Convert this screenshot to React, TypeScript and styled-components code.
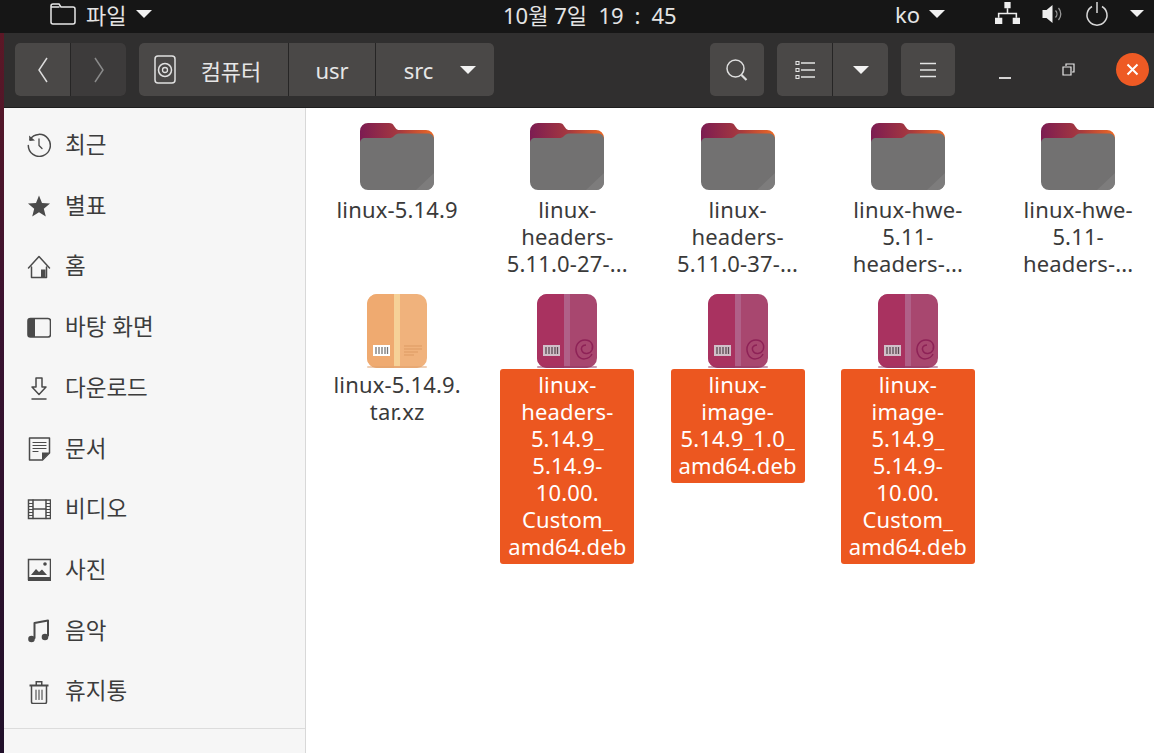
import React from "react"
import styled, { createGlobalStyle } from "styled-components"

const Global = createGlobalStyle`
  html, body { margin: 0; padding: 0; height: 100%; overflow: hidden; background: #f6f6f6; }
  body { font-family: "Noto Sans", "Noto Sans CJK KR", sans-serif; }
`

const Screen = styled.div`
  width: 1154px;
  height: 753px;
  display: flex;
  flex-direction: column;
  overflow: hidden;
`

const TopBar = styled.div`
  height: 33px;
  flex: none;
  box-sizing: border-box;
  padding-bottom: 6px;
  display: flex;
  align-items: center;
  background: #161616;
  color: #e4e4e4;
  font-size: 22px;
`

const AppMenu = styled.div`
  flex: 0 0 503px;
  display: flex;
  align-items: center;
  padding-left: 50px;
  box-sizing: border-box;
  gap: 10px;
`

const Clock = styled.div`
  font-size: 22px;
  white-space: pre;
`

const Tray = styled.div`
  margin-left: auto;
  display: flex;
  align-items: center;
  padding-right: 10px;
`

const Lang = styled.div`
  display: flex;
  align-items: center;
  gap: 9px;
  margin-right: 50px;
`

const TrayIcons = styled.div`
  display: flex;
  align-items: center;
  gap: 21px;
`

const Caret = styled.span<{ $size?: number }>`
  display: inline-block;
  width: 0;
  height: 0;
  border-left: ${(p) => p.$size ?? 7}px solid transparent;
  border-right: ${(p) => p.$size ?? 7}px solid transparent;
  border-top: ${(p) => p.$size ?? 7}px solid #f2f2f2;
`

const Body = styled.div`
  flex: 1;
  min-height: 0;
  display: flex;
  border-left: 4px solid #4a1630;
  border-image: linear-gradient(#5c1826, #3a1230 40%, #20102a) 1;
  background: #f6f6f6;
`

const Window = styled.div`
  flex: 1;
  min-width: 0;
  display: flex;
  flex-direction: column;
`

const Header = styled.div`
  height: 75px;
  flex: none;
  box-sizing: border-box;
  display: flex;
  align-items: center;
  padding: 0 0 1px 11px;
  background: #302f2f;
  border-bottom: 1px solid #1e1e1e;
  color: #e6e6e6;
`

const Group = styled.div<{ $gapLeft?: number }>`
  display: flex;
  height: 53px;
  margin-left: ${(p) => p.$gapLeft ?? 0}px;
  border-radius: 5px;
  overflow: hidden;
  gap: 1px;
  background: #262525;
`

const Tool = styled.div<{ $width: number; $dim?: boolean; $gap?: number; $pad?: string }>`
  width: ${(p) => p.$width}px;
  box-sizing: border-box;
  padding: ${(p) => p.$pad ?? "0"};
  display: flex;
  align-items: center;
  justify-content: center;
  background: ${(p) => (p.$dim ? "#3d3b3b" : "#4a4847")};
  font-size: 22px;
  gap: ${(p) => p.$gap ?? 14}px;
`

const Spacer = styled.div`
  flex: 1;
`

const WindowButtons = styled.div`
  display: flex;
  align-items: center;
  margin-left: 43px;
  margin-right: 5px;
`

const MinimizeGlyph = styled.svg`
  margin-top: 16px;
  margin-right: 50px;
`

const RestoreGlyph = styled.svg`
  margin-right: 41px;
`

const CloseCircle = styled.div`
  width: 33px;
  height: 33px;
  border-radius: 50%;
  background: #ee5a24;
  display: flex;
  align-items: center;
  justify-content: center;
`

const Content = styled.div`
  flex: 1;
  min-height: 0;
  display: flex;
`

const Sidebar = styled.nav`
  width: 302px;
  flex: none;
  box-sizing: border-box;
  background: #f6f6f6;
  border-right: 1px solid #d8d8d8;
  padding-top: 7px;
  display: flex;
  flex-direction: column;
`

const Place = styled.div`
  height: 60.7px;
  flex: none;
  display: flex;
  align-items: center;
  padding-left: 23px;
  gap: 14px;
  color: #3c3c3c;
  font-size: 22.5px;
  line-height: 1;
`

const PlaceIcon = styled.span`
  width: 24px;
  height: 24px;
  flex: none;
  display: block;
  color: #4a4a4a;
`

const Divider = styled.div`
  height: 1px;
  background: #dcdcdc;
  margin-top: 6px;
`

const Files = styled.main`
  flex: 1;
  min-width: 0;
  background: #fff;
  overflow: hidden;
  box-sizing: border-box;
  padding: 12px 0 0 6px;
  display: grid;
  grid-template-columns: repeat(5, 170.25px);
  grid-auto-rows: 161px;
  row-gap: 14px;
`

const FileCell = styled.div`
  display: flex;
  flex-direction: column;
  align-items: center;
`

const IconBox = styled.div<{ $lift: number }>`
  height: 74px;
  box-sizing: border-box;
  padding-bottom: ${(p) => p.$lift}px;
  display: flex;
  align-items: flex-end;
  justify-content: center;
`

const FileLabel = styled.div<{ $selected?: boolean }>`
  width: 134px;
  box-sizing: border-box;
  padding: 2px 0 4px;
  text-align: center;
  font-size: 22px;
  letter-spacing: 0.15px;
  line-height: 27px;
  white-space: pre;
  border-radius: 3px;
  color: ${(p) => (p.$selected ? "#fff" : "#3a3a3a")};
  background: ${(p) => (p.$selected ? "#ec5720" : "transparent")};
`

const FolderIcon = ({ id }: { id: string }) => (
  <svg width="74" height="70" viewBox="0 0 74 70">
    <defs>
      <linearGradient id={id} x1="0" x2="1" y1="0" y2="0">
        <stop offset="0" stopColor="#7c1c52" />
        <stop offset="0.55" stopColor="#a83a3e" />
        <stop offset="1" stopColor="#ee6a24" />
      </linearGradient>
    </defs>
    <path d="M0 10a8 8 0 0 1 8-8h21c3 0 4 1 5 3l1.500 2c1 1.500 2 2 4 2H66a8 8 0 0 1 8 8v20H0z" fill={`url(#${id})`} />
    <path d="M0 22c0-3 2-5 5-5h24c2.500 0 3.500-.5 5-2s3-2.500 5-2.500h29c3.500 0 6 2.500 6 6V61a8 8 0 0 1-8 8H8a8 8 0 0 1-8-8z" fill="#727171" />
    <path d="M74 52v9a8 8 0 0 1-8 8H56z" fill="#7d7c7c" />
  </svg>
)

const PackageIcon = ({ deb }: { deb?: boolean }) => (
  <svg width="60" height="74" viewBox="0 0 60 74">
    <rect width="60" height="74" rx="10" fill={deb ? "#a8476f" : "#f0b27c"} />
    <path d="M10 0h17v74H10a10 10 0 0 1-10-10V10A10 10 0 0 1 10 0z" fill={deb ? "#a93260" : "#efaa70"} />
    <rect x="27" width="6" height="72" fill={deb ? "#b06088" : "#f6d197"} />
    <rect x="6" y="51" width="17" height="11" fill={deb ? "#d0bfc8" : "#fff"} />
    <path d="M9 53v7M12 53v7M15 53v7M18 53v7M20.500 53v7" stroke={deb ? "#5b4a52" : "#777"} strokeWidth="1.300" />
    {deb ? (
      <path d="M55 60c-3 6-12 7-15 0-3-7 1-14 8-14 6 0 9 5 7 10-2 4-8 5-10 1-1.500-3 0-6 4-6" fill="none" stroke="#8e2257" strokeWidth="1.500" />
    ) : (
      <path d="M37 52h18M37 55h18M37 58h14M37 61h10" stroke="#dd9a62" strokeWidth="1" />
    )}
    <rect y="72" width="60" height="2" rx="1" fill={deb ? "#8f3a63" : "#dfa06c"} opacity="0.5" />
  </svg>
)

const Line = ({ d, w = 1.5 }: { d: string; w?: number }) => (
  <path d={d} fill="none" stroke="currentColor" strokeWidth={w} strokeLinecap="round" strokeLinejoin="round" />
)

const icons: Record<string, React.ReactNode> = {
  recent: (
    <>
      <Line d="M3 6.500A11 11 0 1 1 1.300 12.500" />
      <path d="M2 2.500l.5 5.500 5.500-.5z" fill="currentColor" />
      <Line d="M12 6v6.500l3 3" w={1.300} />
    </>
  ),
  star: <path d="M12 1.500l3 7.500 8 .6-6.200 5.100 2 7.800L12 18.200 5.200 22.500l2-7.800L1 9.600l8-.6z" fill="currentColor" />,
  home: (
    <>
      <Line d="M1.500 13L12 1.500 22.500 13" />
      <Line d="M4.500 12v10.500h15V12" />
      <path d="M14 14.500h4.500v8H14z" fill="currentColor" />
    </>
  ),
  desktop: (
    <>
      <rect x="1" y="3.500" width="22.500" height="18.500" rx="2.500" fill="none" stroke="currentColor" strokeWidth="1.600" />
      <path d="M3 3.500h5v18.500H3a2 2 0 0 1-2-2V5.500a2 2 0 0 1 2-2z" fill="currentColor" />
    </>
  ),
  download: (
    <>
      <Line d="M9 2h6v9h4l-7 7.500L5 11h4z" />
      <Line d="M5 23h14" />
    </>
  ),
  docs: (
    <>
      <Line d="M15.500 23H2.500V1h20v15z" />
      <path d="M15 23v-7.500h7.500z" fill="currentColor" />
      <Line d="M6 5.500h13M6 8.500h13M6 11.500h13M6 14.500h5" w={1.200} />
    </>
  ),
  video: (
    <>
      <rect x="1.500" y="3" width="22" height="18.500" fill="none" stroke="currentColor" strokeWidth="1.500" />
      <Line d="M6 3v18.500M19 3v18.500M6 12h13" />
      <path d="M1.500 6.500h4.500M1.500 9.500h4.500M1.500 12.500h4.500M1.500 15.500h4.500M1.500 18.500h4.500M19 6.500h4.500M19 9.500h4.500M19 12.500h4.500M19 15.500h4.500M19 18.500h4.500" stroke="currentColor" strokeWidth="1" />
    </>
  ),
  photo: (
    <>
      <rect x="1.500" y="1.500" width="22" height="20" fill="none" stroke="currentColor" strokeWidth="1.500" />
      <path d="M1 19h23v4H1zM4 17l5-6 3 3 3-2.500 5 5.500z" fill="currentColor" />
      <circle cx="18" cy="6" r="1.800" fill="currentColor" />
    </>
  ),
  music: (
    <>
      <Line d="M7.500 19V4L21 1.500v15" w={2} />
      <circle cx="4.500" cy="20" r="3.300" fill="currentColor" />
      <circle cx="18" cy="18" r="3.300" fill="currentColor" />
    </>
  ),
  trash: (
    <>
      <Line d="M4.500 6.500V22a1.500 1.500 0 0 0 1.500 1.500h12a1.500 1.500 0 0 0 1.500-1.500V6.500" />
      <path d="M2.500 4.500h19v2h-19zM8.500 1h7v3.500H14V2.500h-4v2H8.500z" fill="currentColor" />
      <Line d="M9 10v9.500M12 10v9.500M15 10v9.500" w={1.100} />
    </>
  ),
}

const places = [
  { label: "최근", icon: "recent" },
  { label: "별표", icon: "star" },
  { label: "홈", icon: "home" },
  { label: "바탕 화면", icon: "desktop" },
  { label: "다운로드", icon: "download" },
  { label: "문서", icon: "docs" },
  { label: "비디오", icon: "video" },
  { label: "사진", icon: "photo" },
  { label: "음악", icon: "music" },
  { label: "휴지통", icon: "trash" },
]

const files = [
  { name: "linux-5.14.9", kind: "folder" },
  { name: "linux-\nheaders-\n5.11.0-27-...", kind: "folder" },
  { name: "linux-\nheaders-\n5.11.0-37-...", kind: "folder" },
  { name: "linux-hwe-\n5.11-\nheaders-...", kind: "folder" },
  { name: "linux-hwe-\n5.11-\nheaders-...", kind: "folder" },
  { name: "linux-5.14.9.\ntar.xz", kind: "tar" },
  { name: "linux-\nheaders-\n5.14.9_\n5.14.9-\n10.00.\nCustom_\namd64.deb", kind: "deb", selected: true },
  { name: "linux-\nimage-\n5.14.9_1.0_\namd64.deb", kind: "deb", selected: true },
  { name: "linux-\nimage-\n5.14.9_\n5.14.9-\n10.00.\nCustom_\namd64.deb", kind: "deb", selected: true },
]

export default function App() {
  return (
    <Screen>
      <Global />
      <TopBar>
        <AppMenu>
          <svg width="26" height="22" viewBox="0 0 26 22">
            <path d="M1 19V3a2 2 0 0 1 2-2h6l2 3h12a2 2 0 0 1 2 2v13a2 2 0 0 1-2 2H3a2 2 0 0 1-2-2zM9.500 4H1" fill="none" stroke="#e8e8e8" strokeWidth="1.500" />
          </svg>
          <span>파일</span>
          <Caret $size={8} />
        </AppMenu>
        <Clock>{"10월 7일  19\u2002:\u200245"}</Clock>
        <Tray>
          <Lang>
            <span>ko</span>
            <Caret $size={8} />
          </Lang>
          <TrayIcons>
            <svg width="25" height="23" viewBox="0 0 24 22">
              <path d="M9 0h6v6H9zM0 15h7v6H0zM17 15h7v6h-7z" fill="#eee" />
              <path d="M12 6v5M3.500 15v-4h17v4" fill="none" stroke="#eee" strokeWidth="1.500" />
            </svg>
            <svg width="23" height="20" viewBox="0 0 22 20">
              <path d="M1 6h4l6-5v18l-6-5H1z" fill="#eee" />
              <path d="M14 6.500a5 5 0 0 1 0 7M17 4a9 9 0 0 1 0 12" fill="none" stroke="#999" strokeWidth="1.300" />
            </svg>
            <svg width="24" height="24" viewBox="0 0 24 24">
              <path d="M7 4.500a10 10 0 1 0 10 0M12 0v11" fill="none" stroke="#d8d8d8" strokeWidth="1.500" />
            </svg>
            <Caret />
          </TrayIcons>
        </Tray>
      </TopBar>
      <Body>
        <Window>
          <Header>
            <Group>
              <Tool $width={55}>
                <svg width="12" height="26" viewBox="0 0 12 26"><path d="M10 1L2 13l8 12" fill="none" stroke="#dcdcdc" strokeWidth="1.500" /></svg>
              </Tool>
              <Tool $width={55} $dim>
                <svg width="12" height="26" viewBox="0 0 12 26"><path d="M2 1l8 12-8 12" fill="none" stroke="#8a8a8a" strokeWidth="1.500" /></svg>
              </Tool>
            </Group>
            <Group $gapLeft={13}>
              <Tool $width={149} $gap={25} $pad="0 12px 0 0">
                <svg width="22" height="29" viewBox="0 0 22 29">
                  <rect x="1" y="1" width="20" height="27" rx="3" fill="none" stroke="#e0e0e0" strokeWidth="1.500" />
                  <circle cx="11" cy="15" r="6.500" fill="none" stroke="#e0e0e0" strokeWidth="1.500" />
                  <circle cx="11" cy="15" r="2.500" fill="none" stroke="#e0e0e0" strokeWidth="1.300" />
                </svg>
                <span>컴퓨터</span>
              </Tool>
              <Tool $width={86}>usr</Tool>
              <Tool $width={118} $gap={27} $pad="0 0 0 10px">
                <span>src</span>
                <Caret $size={8} />
              </Tool>
            </Group>
            <Spacer />
            <Group>
              <Tool $width={54}>
                <svg width="24" height="24" viewBox="0 0 24 24">
                  <circle cx="10.500" cy="10.500" r="8.500" fill="none" stroke="#dedede" strokeWidth="1.500" />
                  <path d="M16.500 17l5 5" stroke="#dedede" strokeWidth="2.200" />
                </svg>
              </Tool>
            </Group>
            <Group $gapLeft={13}>
              <Tool $width={55}>
                <svg width="20" height="20" viewBox="0 0 20 20">
                  <path d="M6 3h14M6 10h14M6 17h14" stroke="#e4e4e4" strokeWidth="1.500" />
                  <path d="M1 1.500h3v3H1zM1 8.500h3v3H1zM1 15.500h3v3H1z" fill="none" stroke="#e4e4e4" strokeWidth="1.100" />
                </svg>
              </Tool>
              <Tool $width={55}>
                <Caret $size={8} />
              </Tool>
            </Group>
            <Group $gapLeft={13}>
              <Tool $width={54}>
                <svg width="18" height="18" viewBox="0 0 18 18">
                  <path d="M1 2.500h16M1 9h16M1 15.500h16" stroke="#e4e4e4" strokeWidth="1.500" />
                </svg>
              </Tool>
            </Group>
            <WindowButtons>
              <MinimizeGlyph width="14" height="4" viewBox="0 0 14 4"><path d="M1 2h12" stroke="#e8e8e8" strokeWidth="1.800" /></MinimizeGlyph>
              <RestoreGlyph width="13" height="13" viewBox="0 0 13 13">
                <path d="M1 4h8v8H1zM4 3V1h8v8h-2" fill="none" stroke="#e8e8e8" strokeWidth="1.200" />
              </RestoreGlyph>
              <CloseCircle>
                <svg width="13" height="13" viewBox="0 0 13 13"><path d="M1.500 1.500l10 10M11.500 1.500l-10 10" stroke="#fff" strokeWidth="2" /></svg>
              </CloseCircle>
            </WindowButtons>
          </Header>
          <Content>
            <Sidebar>
              {places.map((p) => (
                <Place key={p.label}>
                  <PlaceIcon>
                    <svg width="24" height="24" viewBox="0 0 24 24">{icons[p.icon]}</svg>
                  </PlaceIcon>
                  {p.label}
                </Place>
              ))}
              <Divider />
            </Sidebar>
            <Files>
              {files.map((f, i) => (
                <FileCell key={i}>
                  <IconBox $lift={f.kind === "folder" ? 3 : 1}>
                    {f.kind === "folder" ? <FolderIcon id={`folder-${i}`} /> : <PackageIcon deb={f.kind === "deb"} />}
                  </IconBox>
                  <FileLabel $selected={f.selected}>{f.name}</FileLabel>
                </FileCell>
              ))}
            </Files>
          </Content>
        </Window>
      </Body>
    </Screen>
  )
}
